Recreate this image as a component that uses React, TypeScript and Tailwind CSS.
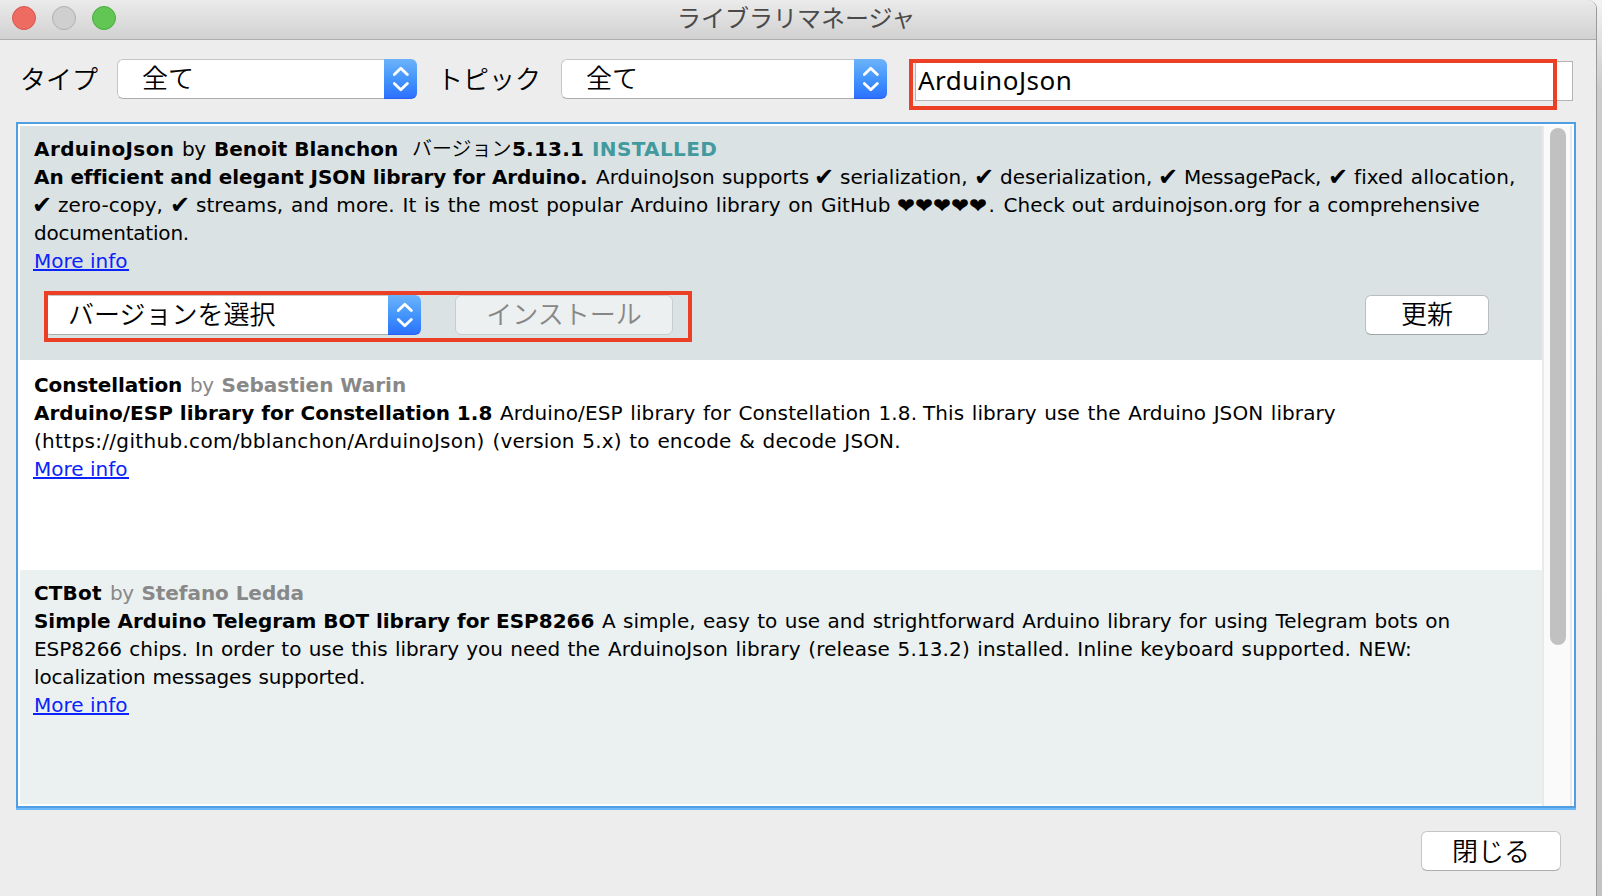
import React from "react";

function Run({ className = "", children }: { className?: string; children: React.ReactNode }) {
  return <span className={`block shrink-0 ${className}`}>{children}</span>;
}

function Line({ className = "", children }: { className?: string; children: React.ReactNode }) {
  return <div className={`flex h-7 items-start whitespace-pre ${className}`}>{children}</div>;
}

function Check({ className = "w-[26px]" }: { className?: string }) {
  return <Run className={`text-[24px] leading-[29px] ${className}`}>✔</Run>;
}

function MoreInfo() {
  return (
    <a className="-ml-px block h-6 w-24 border-b-2 border-[#0b24fb] pl-px whitespace-pre text-[#0b24fb]">
      More info
    </a>
  );
}

function Stepper() {
  return (
    <div className="flex w-[33px] shrink-0 items-center justify-center rounded-r-[6px] border-b border-[#2860f5] bg-linear-to-b from-[#6db3fa] via-[#4496fc] to-[#2d70fd]">
      <svg width="16" height="26" viewBox="0 0 16 26" fill="none" stroke="#fff" strokeWidth="2.8" strokeLinecap="round" strokeLinejoin="round">
        <path d="M1.3 8.6 7.8 2.2 14.3 8.6M1.3 17.4 7.8 23.8 14.3 17.4" />
      </svg>
    </div>
  );
}

function Select({ label, className, inset = "pl-[24px]" }: { label: string; className: string; inset?: string }) {
  return (
    <div className={`flex h-10 shrink-0 rounded-[6px] bg-white ${className}`}>
      <div className={`flex grow items-center rounded-l-[6px] border border-r-0 border-[#c6c6c6] border-b-[#acacac] pb-[5px] whitespace-nowrap ${inset}`}>
        {label}
      </div>
      <Stepper />
    </div>
  );
}

function Button({ label, className }: { label: string; className: string }) {
  return (
    <button className={`flex h-10 shrink-0 items-center justify-center rounded-[6px] border pb-[4px] whitespace-nowrap ${className}`}>
      {label}
    </button>
  );
}

export default function App() {
  return (
    <div className="relative flex h-[896px] w-[1602px] overflow-hidden bg-linear-to-b from-[#f3f3f3] via-[#cccccc] via-10% to-[#c3c3c3] font-['DejaVu_Sans','Noto_Sans_CJK_JP',sans-serif] text-black">
      <div className="flex w-[1597px] flex-col overflow-hidden rounded-tr-[9px] border-r border-[#9a9a9a] bg-[#ededed]">
        <header className="flex h-10 shrink-0 items-center border-b border-[#adadad] bg-linear-to-b from-[#ebebeb] to-[#d1d1d1] pl-3">
          <div className="flex gap-4 pb-[3px]">
            <span className="size-6 rounded-full border border-[#d8574d] bg-[#ed6b60]" />
            <span className="size-6 rounded-full border border-[#b1b1b1] bg-[#cfcfcf]" />
            <span className="size-6 rounded-full border border-[#4dab42] bg-[#61c654]" />
          </div>
          <h1 className="ml-[561px] pb-[5px] font-['Noto_Sans_CJK_JP',sans-serif] text-[24px] leading-8 font-normal whitespace-nowrap text-[#4a4a4a]">
            ライブラリマネージャ
          </h1>
        </header>

        <div className="flex h-[82px] shrink-0 items-start pt-[19px] font-['Noto_Sans_CJK_JP',sans-serif] text-[26px] font-[350]">
          <span className="w-[97px] shrink-0 pl-[20px] leading-[38px] whitespace-nowrap">タイプ</span>
          <Select label="全て" className="ml-5 w-[300px]" />
          <span className="ml-[20px] w-[124px] shrink-0 leading-[38px] whitespace-nowrap">トピック</span>
          <Select label="全て" className="w-[326px]" />
          <div className="mt-[2px] ml-[28px] flex h-10 w-[658px] shrink-0 items-center border border-[#b4b4b4] bg-white pb-[2px] pl-[2px] font-['Noto_Sans',sans-serif] font-normal tracking-[0.5px]">
            ArduinoJson
          </div>
        </div>

        <div className="ml-4 flex h-[688px] w-[1560px] shrink-0 flex-col border-b-2 border-[#6bb8fb]">
          <div className="flex h-[686px] border-2 border-[#509fe2] bg-white">
            <div className="flex w-[1524px] shrink-0 flex-col py-[2px] pl-[2px] text-[20px] leading-7">
              <section className="h-[234px] shrink-0 bg-[#dae2e3] pt-[9px] pl-[14px]">
                <Line>
                  <Run className="w-[148px] font-bold tracking-[0.4px]">ArduinoJson</Run>
                  <Run className="w-[32px] tracking-[-0.5px]">by</Run>
                  <Run className="w-[198px] font-bold tracking-[0.02px]">Benoit Blanchon</Run>
                  <Run className="w-[100px] font-['Noto_Sans_CJK_JP',sans-serif] font-[350] leading-[26px]">バージョン</Run>
                  <Run className="w-[80px] font-bold tracking-[0.2px]">5.13.1</Run>
                  <Run className="font-bold tracking-[0.36px] text-[#429a9f]">INSTALLED</Run>
                </Line>
                <Line>
                  <Run className="w-[562px] font-bold tracking-[-0.1px]">An efficient and elegant JSON library for Arduino.</Run>
                  <Run className="w-[218px] [word-spacing:0.9px]">ArduinoJson supports</Run>
                  <Check />
                  <Run className="w-[134px] tracking-[0.02px]">serialization,</Run>
                  <Check />
                  <Run className="w-[158px]">deserialization,</Run>
                  <Check />
                  <Run className="w-[144px] tracking-[-0.24px]">MessagePack,</Run>
                  <Check />
                  <Run className="tracking-[0.1px] [word-spacing:1px]">fixed allocation,</Run>
                </Line>
                <Line>
                  <Check className="-ml-[2px] w-[26px]" />
                  <Run className="w-[112px] tracking-[0.05px]">zero-copy,</Run>
                  <Check />
                  <Run className="w-[701px] tracking-[0.05px] [word-spacing:1.25px]">
                    streams, and more. It is the most popular Arduino library on GitHub
                  </Run>
                  <Run className="w-[91.5px] text-[21.5px] leading-[29px]">❤❤❤❤❤</Run>
                  <Run className="w-[15.1px]">.</Run>
                  <Run className="tracking-[-0.05px] [word-spacing:0.68px]">Check out arduinojson.org for a comprehensive</Run>
                </Line>
                <Line>
                  <Run className="tracking-[-0.2px]">documentation.</Run>
                </Line>
                <MoreInfo />
                <div className="mt-[24px] ml-[10px] flex items-start font-['Noto_Sans_CJK_JP',sans-serif] text-[26px] leading-9 font-[350]">
                  <Select label="バージョンを選択" className="w-[377px]" inset="pl-[23px]" />
                  <Button label="インストール" className="ml-[34px] w-[218px] border-[#c6cecf] bg-[#ecf0f1] text-[#878787]" />
                  <Button label="更新" className="ml-[692px] w-[124px] border-[#b9bfc0] border-b-[#9fa5a6] bg-white" />
                </div>
              </section>

              <section className="h-[210px] shrink-0 bg-white pt-[11px] pl-[14px]">
                <Line>
                  <Run className="w-[156px] font-bold tracking-[-0.08px]">Constellation</Run>
                  <Run className="w-[31.5px] tracking-[-0.5px] text-[#888888]">by</Run>
                  <Run className="font-bold text-[#888888]">Sebastien Warin</Run>
                </Line>
                <Line>
                  <Run className="w-[466px] font-bold tracking-[0.01px]">Arduino/ESP library for Constellation 1.8</Run>
                  <Run className="w-[423px] tracking-[0.1px] [word-spacing:1.2px]">
                    Arduino/ESP library for Constellation 1.8.
                  </Run>
                  <Run className="tracking-[0.07px] [word-spacing:1.2px]">This library use the Arduino JSON library</Run>
                </Line>
                <Line>
                  <Run className="w-[458.5px] tracking-[0.32px]">(https://github.com/bblanchon/ArduinoJson)</Run>
                  <Run className="tracking-[0.14px] [word-spacing:1.2px]">(version 5.x) to encode &amp; decode JSON.</Run>
                </Line>
                <MoreInfo />
              </section>

              <section className="h-[234px] shrink-0 bg-[#ebf1f1] pt-[9px] pl-[14px]">
                <Line>
                  <Run className="w-[76px] font-bold tracking-[0.15px]">CTBot</Run>
                  <Run className="w-[31.5px] tracking-[-0.5px] text-[#888888]">by</Run>
                  <Run className="font-bold tracking-[-0.06px] text-[#888888]">Stefano Ledda</Run>
                </Line>
                <Line>
                  <Run className="w-[568px] font-bold tracking-[-0.03px]">Simple Arduino Telegram BOT library for ESP8266</Run>
                  <Run className="tracking-[0.02px] [word-spacing:1px]">
                    A simple, easy to use and strightforward Arduino library for using Telegram bots on
                  </Run>
                </Line>
                <Line>
                  <Run className="w-[574px] tracking-[-0.04px] [word-spacing:1px]">
                    ESP8266 chips. In order to use this library you need the
                  </Run>
                  <Run className="tracking-[0.13px] [word-spacing:1px]">
                    ArduinoJson library (release 5.13.2) installed. Inline keyboard supported. NEW:
                  </Run>
                </Line>
                <Line>
                  <Run className="tracking-[-0.15px] [word-spacing:0.8px]">localization messages supported.</Run>
                </Line>
                <MoreInfo />
              </section>
            </div>

            <div className="mt-[2px] mr-[2px] flex grow justify-center border-x-2 border-[#e9e9e9] bg-[#fafafa] pt-[2px] pl-[2px]">
              <div className="h-[517px] w-4 rounded-full bg-[#c1c1c1]" />
            </div>
          </div>
        </div>

        <footer className="flex justify-end pt-[21px] pr-[35px] font-['Noto_Sans_CJK_JP',sans-serif] text-[26px] font-[350]">
          <Button label="閉じる" className="w-[140px] border-[#c6c6c6] border-b-[#acacac] bg-white" />
        </footer>
      </div>

      <div className="absolute top-[59px] left-[909px] h-[51px] w-[648px] border-4 border-[#eb4026]" />
      <div className="absolute top-[291px] left-[44px] h-[51px] w-[648px] border-4 border-[#eb4026]" />
    </div>
  );
}
